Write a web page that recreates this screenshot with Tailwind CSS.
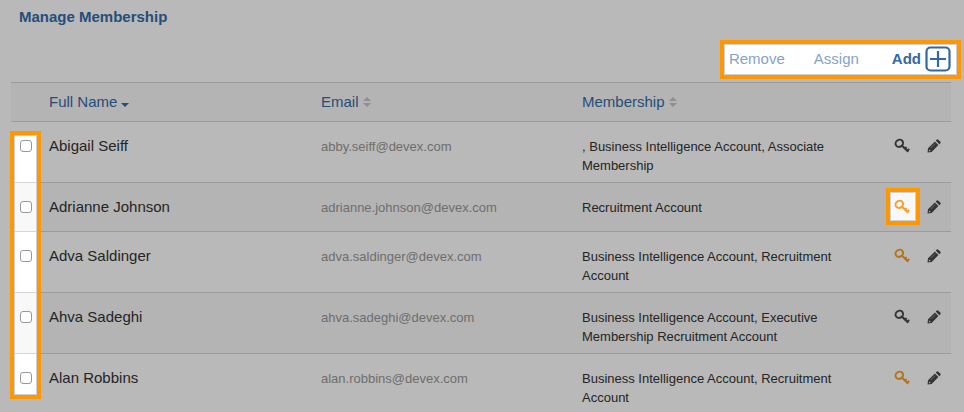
<!DOCTYPE html>
<html lang="en">
<head>
<meta charset="utf-8">
<title>Manage Membership</title>
<script src="https://cdn.jsdelivr.net/npm/@tailwindcss/browser@4"></script>
</head>
<body class="relative min-h-screen overflow-hidden bg-white font-['Liberation_Sans',Arial,sans-serif] text-[15px] text-[#333]">
<svg class="hidden" aria-hidden="true">
  <symbol id="key" viewBox="0 0 16 16">
    <g fill="none" stroke="currentColor">
      <ellipse cx="5.300" cy="5.300" rx="3.900" ry="3.400" transform="rotate(-35 5.300 5.300)" stroke-width="2"/>
      <path d="M8 7.700 14.400 13.600" stroke-width="2.200"/>
      <path d="M10.600 11.200 12.600 9M12.800 13.400 15.200 10.800" stroke-width="1.800"/>
    </g>
  </symbol>
  <symbol id="pencil" viewBox="0 0 14 14">
    <path fill="currentColor" d="M.5 13.500 1 9.300 7.900 2.400 11.400 5.900 4.700 13ZM8.700 1.600 9.800.6Q10.600-.1 11.400.7L13.300 2.600Q14.100 3.400 13.400 4.200L12.300 5.200Z"/>
    <path d="M2.100 10.400 3.600 11.900 1.900 12.200Z" fill="#fff"/>
    <path d="M3.700 9 8.200 4.500" stroke="#aaa" stroke-width=".7"/>
  </symbol>
  <symbol id="sort" viewBox="0 0 8 10">
    <path fill="currentColor" d="M0 4 4 0 8 4ZM0 6H8L4 10Z"/>
  </symbol>
</svg>

<main class="pr-[13px] pl-[11px]">
  <h1 class="px-2 pt-2 text-[15px] leading-[18px] font-bold text-[#346ca9]">Manage Membership</h1>
  <div class="flex h-14 items-center justify-end pt-[10px] text-[#34689f]">
    <button type="button" class="mr-[29px] text-[#86a3c5]">Remove</button>
    <button type="button" class="mr-[33px] text-[#86a3c5]">Assign</button>
    <button type="button" class="flex items-center gap-1 font-bold">Add
      <svg class="size-[26px]" viewBox="0 0 26 26" fill="none" stroke="currentColor" stroke-width="2.200" aria-hidden="true"><rect x="1.500" y="1.500" width="23" height="23" rx="4"/><path d="M5 13H21M13 5V21"/></svg>
    </button>
  </div>

  <table class="w-full table-fixed border-separate border-spacing-0 text-left [&_td]:border-b [&_td]:border-[#d6d6d6] [&_td]:align-top [&_th]:border-y [&_th]:border-[#d6d6d6] [&_th]:font-normal">
    <colgroup><col class="w-[38px]"><col class="w-[272px]"><col class="w-[261px]"><col><col class="w-[66px]"></colgroup>
    <thead>
      <tr class="h-10 bg-[#f8f8f8] text-[#346ca9]">
        <th></th>
        <th><button type="button" class="flex items-center gap-1">Full Name <svg class="mt-[6px] h-1 w-2" viewBox="0 0 8 4" aria-hidden="true"><path fill="currentColor" d="M0 0H8L4 4Z"/></svg></button></th>
        <th><button type="button" class="flex items-center gap-1">Email <svg class="h-[10px] w-2 text-[#c4c4c4]" aria-hidden="true"><use href="#sort"/></svg></button></th>
        <th><button type="button" class="flex items-center gap-1">Membership <svg class="h-[10px] w-2 text-[#c4c4c4]" aria-hidden="true"><use href="#sort"/></svg></button></th>
        <th></th>
      </tr>
    </thead>
    <tbody id="members"></tbody>
  </table>
</main>

<template id="row">
  <tr class="h-[49px] even:bg-[#f8f8f8]">
    <td class="pt-[18px] pl-[9px]"><input type="checkbox" class="block size-3 appearance-none rounded-[3px] border border-[#999] bg-white checked:bg-[#34689f]"></td>
    <td class="pt-[14px] leading-5" data-name></td>
    <td class="pt-[15px] text-[13px] leading-[19px] text-[#989898]" data-email></td>
    <td class="pt-[15px] pr-10 pb-[7px] text-[13px] leading-[19px]" data-membership></td>
    <td class="pt-4"><div class="flex items-center gap-[17px] pl-[9px] text-[#4a4a4a]">
      <button type="button" data-key><svg class="block size-4" aria-hidden="true"><use href="#key"/></svg></button>
      <button type="button" data-edit><svg class="block size-[14px]" aria-hidden="true"><use href="#pencil"/></svg></button>
    </div></td>
  </tr>
</template>

<!-- Dimmed layer with openings over the highlighted controls -->
<svg class="pointer-events-none absolute inset-0 h-full w-full" aria-hidden="true">
  <mask id="openings">
    <rect width="100%" height="100%" fill="#fff"/>
    <rect x="14" y="135" width="23" height="260"/>
    <svg x="100%" overflow="visible"><rect x="-240" y="44" width="233" height="31"/><rect x="-74" y="192" width="26" height="29"/></svg>
  </mask>
  <rect width="100%" height="100%" fill="#000" fill-opacity=".275" mask="url(#openings)"/>
  <g fill="none" stroke="#ff9800" stroke-width="4">
    <rect x="12" y="133" width="27" height="264"/>
    <svg x="100%" overflow="visible"><rect x="-242" y="42" width="237" height="35"/><rect x="-76" y="190" width="30" height="33"/></svg>
  </g>
  <g fill="none" stroke="#ccd0d6">
    <rect x="14.500" y="135.500" width="22" height="259"/>
    <svg x="100%" overflow="visible"><rect x="-239.500" y="44.500" width="232" height="30"/><rect x="-73.500" y="192.500" width="25" height="28"/></svg>
  </g>
</svg>

<script>
const members = [
  ["Abigail Seiff", "abby.seiff@devex.com", ", Business Intelligence Account, Associate Membership", false],
  ["Adrianne Johnson", "adrianne.johnson@devex.com", "Recruitment Account", true],
  ["Adva Saldinger", "adva.saldinger@devex.com", "Business Intelligence Account, Recruitment Account", true],
  ["Ahva Sadeghi", "ahva.sadeghi@devex.com", "Business Intelligence Account, Executive Membership Recruitment Account", false],
  ["Alan Robbins", "alan.robbins@devex.com", "Business Intelligence Account, Recruitment Account", true]
];
const template = document.getElementById("row");
for (const [name, email, membership, admin] of members) {
  const row = template.content.cloneNode(true);
  row.querySelector("input").setAttribute("aria-label", "Select " + name);
  row.querySelector("[data-name]").textContent = name;
  row.querySelector("[data-email]").textContent = email;
  row.querySelector("[data-membership]").textContent = membership;
  const key = row.querySelector("[data-key]");
  key.setAttribute("aria-label", "Access for " + name);
  if (admin) key.classList.add("text-[#fa9d2b]");
  row.querySelector("[data-edit]").setAttribute("aria-label", "Edit " + name);
  document.getElementById("members").append(row);
}
</script>
</body>
</html>
